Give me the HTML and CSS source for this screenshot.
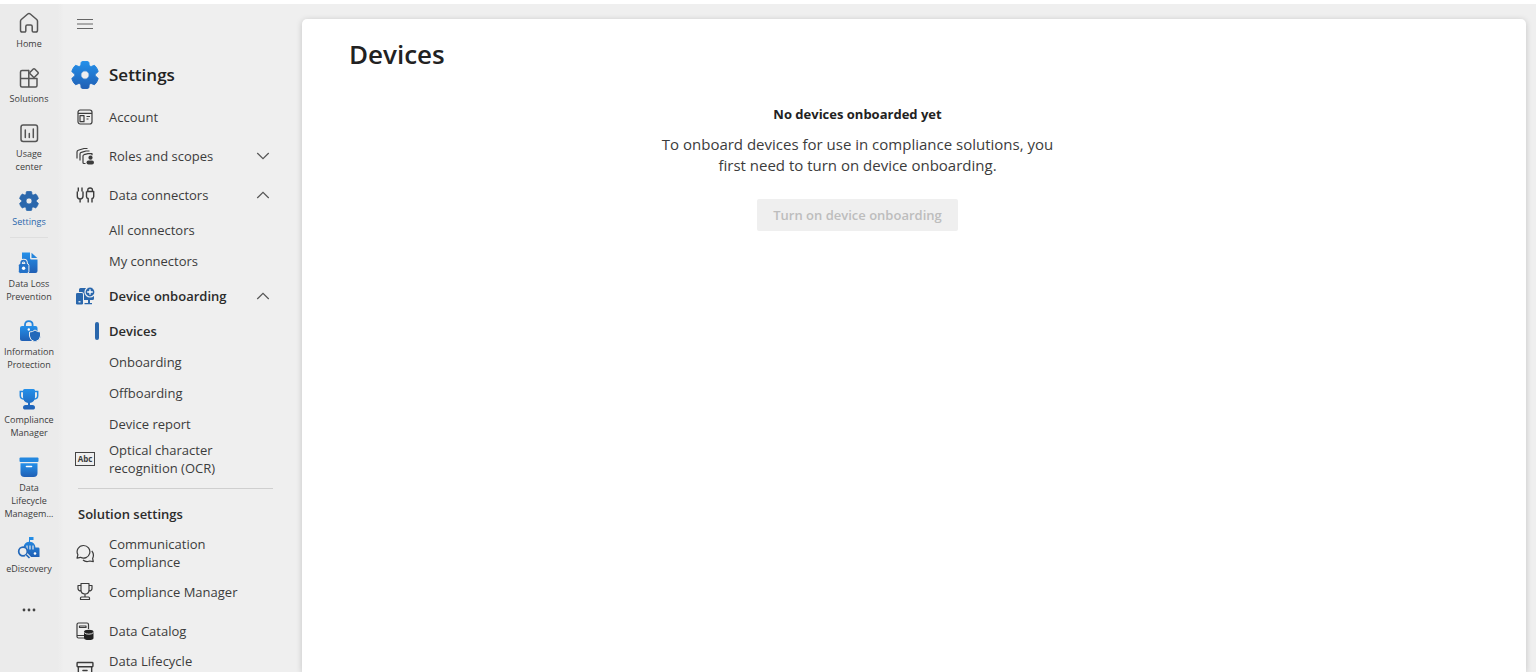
FILE: index.html
```html
<!DOCTYPE html>
<html lang="en">
<head>
<meta charset="utf-8">
<meta name="viewport" content="width=device-width, initial-scale=1">
<title>Devices - Settings</title>
<link rel="stylesheet" href="styles.css">
</head>
<body>
<svg class="defs" aria-hidden="true">
  <defs>
    <linearGradient id="blue" x1="0" y1="0" x2="0" y2="1"><stop offset="0" stop-color="#2490ea"/><stop offset="1" stop-color="#205fb4"/></linearGradient>
    <symbol id="gear" viewBox="2 2 20 20"><path fill-rule="evenodd" stroke-width=".7" stroke-linejoin="round" d="M12.01 2.25c.74 0 1.47.1 2.18.25.32.07.55.33.59.65l.17 1.53a1.38 1.38 0 0 0 1.92 1.11l1.4-.61c.3-.13.64-.06.85.17a9.8 9.8 0 0 1 2.2 3.8c.1.3 0 .63-.26.82l-1.24.92a1.38 1.38 0 0 0 0 2.22l1.24.92c.26.19.36.52.27.82a9.8 9.8 0 0 1-2.2 3.8.75.75 0 0 1-.85.17l-1.4-.62a1.38 1.38 0 0 0-1.93 1.12l-.17 1.52a.75.75 0 0 1-.58.65 9.52 9.52 0 0 1-4.4 0 .75.75 0 0 1-.57-.65l-.17-1.52a1.38 1.38 0 0 0-1.93-1.11l-1.4.62a.75.75 0 0 1-.85-.18 9.8 9.8 0 0 1-2.2-3.8c-.1-.3 0-.63.27-.82l1.24-.92a1.38 1.38 0 0 0 0-2.22l-1.24-.92a.75.75 0 0 1-.28-.82 9.8 9.8 0 0 1 2.2-3.8c.23-.23.57-.3.86-.17l1.4.62c.4.17.86.15 1.25-.08.38-.22.63-.6.68-1.04l.17-1.53a.75.75 0 0 1 .58-.65c.72-.16 1.45-.24 2.2-.25ZM12 9a3 3 0 1 0 0 6 3 3 0 0 0 0-6Z"/></symbol>
    <symbol id="chevron" viewBox="0 0 20 20"><path d="M4.500 7.300 10 12.700l5.500-5.400" fill="none" stroke="#555" stroke-width="1.200" stroke-linecap="round"/></symbol>
    <symbol id="archive" viewBox="0 0 24 24"><g fill="none" stroke="currentColor" stroke-width="1.700" stroke-linejoin="round"><rect x="2.500" y="3" width="19" height="5" rx=".8"/><path d="M4 8v11q0 2.500 2.500 2.500h11q2.500 0 2.500-2.500V8M9.500 12.500h5" stroke-linecap="round"/></g></symbol>
  </defs>
</svg>
<div class="app">
  <nav class="rail" aria-label="Main">
    <a class="rail-item" href="#"><svg class="rail-icon line" viewBox="0 0 24 24"><path d="M3.500 10.200q0-1 .8-1.700L10.700 3q1.300-1.100 2.600 0l6.400 5.500q.8.700.8 1.700v9q0 1.800-1.800 1.800h-2.200q-1.300 0-1.300-1.300v-4.200q0-1.500-1.500-1.500h-3.400q-1.500 0-1.500 1.500v4.200Q8.800 21 7.500 21H5.300q-1.800 0-1.800-1.800z"/></svg><span>Home</span></a>
    <a class="rail-item" href="#"><svg class="rail-icon line" viewBox="0 0 24 24"><path d="M11.500 4.500H5q-1.500 0-1.500 1.500v13.500Q3.500 21 5 21h13.500q1.500 0 1.500-1.500V12.500H3.500M11.800 4.500V21"/><rect x="13.700" y="3.700" width="6.600" height="6.600" rx="1" transform="rotate(45 17 7)"/></svg><span>Solutions</span></a>
    <a class="rail-item" href="#"><svg class="rail-icon line" viewBox="0 0 24 24"><rect x="4" y="4" width="16.500" height="16.500" rx="2.200"/><path d="M8.300 9v7.500M12.300 12.500v4M16.300 8v8.500"/></svg><span>Usage center</span></a>
    <a class="rail-item selected" href="#" aria-current="page"><svg class="rail-icon solid" viewBox="0 0 24 24"><use href="#gear" x="2" y="2" width="20" height="20"/></svg><span>Settings</span></a>
    <hr class="rail-rule">
    <a class="rail-item" href="#"><svg class="rail-icon" viewBox="0 0 24 24"><path fill="url(#blue)" d="M5 1.500h8V7q0 1.500 1.500 1.500h6V20q0 2-2 2H5z"/><path fill="#2585dc" d="m14.500 1.700 5.800 5.400h-5.800z"/><rect x="1.300" y="12.500" width="10.600" height="10" rx="2" fill="#2472c8" stroke="#ececec"/><path d="M4.100 13v-.8q0-2.600 2.500-2.600t2.500 2.600v.8" fill="none" stroke="#ececec" stroke-width="3.600"/><path d="M4.100 13.500v-1.300q0-2.600 2.500-2.600t2.500 2.600v1.300" fill="none" stroke="#2472c8" stroke-width="1.600"/><circle cx="6.600" cy="17.300" r="1.700" fill="#fff"/></svg><span>Data Loss Prevention</span></a>
    <a class="rail-item" href="#"><svg class="rail-icon" viewBox="0 0 24 24"><path d="M8 8V5.800q0-3.600 3.800-3.600t3.800 3.600V8" fill="none" stroke="#2585dc" stroke-width="1.800"/><path fill="url(#blue)" d="M5 7h13.500q2 0 2 2v11q0 2-2 2H5q-2 0-2-2V9q0-2 2-2z"/><path fill="#2469ba" stroke="#ececec" d="M12.500 13q3.300 0 5.500-2 2.300 2 5.500 2v4q0 4-5.500 6-5.500-2-5.500-6z"/><circle cx="11.800" cy="10.500" r="1.200" fill="#fff"/></svg><span>Information Protection</span></a>
    <a class="rail-item" href="#"><svg class="rail-icon" viewBox="0 0 24 24"><path d="M6.500 4.500H3.300v4.200q0 3.300 4 3.300M17.500 4.500h3.200v4.200q0 3.300-4 3.300" fill="none" stroke="#2387df" stroke-width="1.500"/><path fill="url(#blue)" d="M7.500 2h9q1.500 0 1.500 1.500V10q0 5-5 5.900V18h2.500q2.500 0 2.500 2.500 0 2-1.500 2h-9q-1.500 0-1.500-2Q6 18 8.500 18H11v-2.100Q6 15 6 10V3.500Q6 2 7.500 2z"/></svg><span>Compliance Manager</span></a>
    <a class="rail-item" href="#"><svg class="rail-icon" viewBox="0 0 24 24"><rect x="2.500" y="2.500" width="19" height="4.500" rx="1" fill="#2387df"/><path fill="url(#blue)" d="M3.500 8.300h17V18q0 4-4 4h-9q-4 0-4-4z"/><path d="M9.500 11.500h5" stroke="#fff" stroke-width="1.600" stroke-linecap="round"/></svg><span>Data Lifecycle Managem...</span></a>
    <a class="rail-item" href="#"><svg class="rail-icon" viewBox="0 0 24 24"><path fill="url(#blue)" d="M12 1h4.500v3H13v1.800q5 .7 5.500 5.700h2.700q1.300 0 1.300 1.300V21H9v-9.500H6.500q.5-5 5.500-5.700z"/><path d="M10 9.500v4M13 9.500v4M16 9.500v4" stroke="#ececec" stroke-width="1.200"/><circle cx="6" cy="15.500" r="4.300" fill="#ececec" stroke="#2469ba" stroke-width="1.700"/><path d="m9.300 18.500 3.400 3.400" stroke="#ececec" stroke-width="3.500"/><path d="m9 18.500 3.500 3.500" stroke="#2469ba" stroke-width="1.700"/><circle cx="18" cy="17.500" r="1.300" fill="#fff"/></svg><span>eDiscovery</span></a>
    <button class="rail-item more" type="button" aria-label="More"><svg class="rail-icon" viewBox="0 0 24 24" fill="#444"><circle cx="7" cy="12" r="1.400"/><circle cx="12" cy="12" r="1.400"/><circle cx="17" cy="12" r="1.400"/></svg></button>
  </nav>

  <nav class="side" aria-label="Settings">
    <button class="menu" type="button" aria-label="Collapse navigation"><svg viewBox="0 0 20 20"><path d="M2 5.500h16M2 10h16M2 14.500h16" stroke="#666" stroke-width="1.200"/></svg></button>
    <div class="side-head"><svg class="head-icon" viewBox="0 0 24 24"><use href="#gear" fill="url(#blue)" stroke="url(#blue)"/></svg><h2>Settings</h2></div>

    <a class="row" href="#"><svg class="icon" viewBox="0 0 20 20"><rect x="3" y="3" width="14" height="14" rx="2.200"/><path d="M3 6.300h14M11.500 9.500H15M11.500 12h2"/><rect x="5" y="8.700" width="4" height="6"/></svg><span>Account</span></a>
    <button class="row" type="button" aria-expanded="false"><svg class="icon" viewBox="0 0 20 20"><path d="M2 12.500V6q0-1.300 1.300-1.700L9 2.500h3.500M5 14.500V8q0-1.300 1.300-1.600L11 5h3.500M10.500 17.500H9q-1 0-1-1V10q0-1 1-1.300l4-1H17v1.500"/><circle cx="15.500" cy="11.700" r="2.100" fill="currentColor" stroke="none"/><rect x="11.500" y="14.500" width="7.500" height="4" rx="2" fill="currentColor" stroke="none"/></svg><span>Roles and scopes</span><svg class="chevron"><use href="#chevron"/></svg></button>
    <button class="row" type="button" aria-expanded="true"><svg class="icon" viewBox="0 0 20 20"><path stroke-width="1.400" d="M3.300 2.500v4M7 2.500v4M2.300 6.500v4.800q0 2.700 2.800 2.700T8 11.300V6.500M5.100 14v3.500M12.800 6.500V5q0-2 2.300-2t2.300 2v1.500M11.500 6.500h7.200v5q0 1.800-1.700 2v4M11.500 6.500v5q0 1.800 1.700 2v4"/></svg><span>Data connectors</span><svg class="chevron up"><use href="#chevron"/></svg></button>
    <a class="sub" href="#">All connectors</a>
    <a class="sub" href="#">My connectors</a>
    <button class="row strong" type="button" aria-expanded="true"><svg class="icon" viewBox="0 0 20 20"><path fill="#2a67ac" stroke="none" d="M5.500 2H12v12H9V8.500Q9 6 6.500 6H4V3.500Q4 2 5.500 2zM9 10h10v2.500q0 1.500-1.500 1.500H15v3h2v1.200H9.500V17H13v-3H9z"/><rect x="1" y="7" width="7" height="11.500" rx="1.300" fill="#2a67ac" stroke="none"/><circle cx="15" cy="6" r="5" fill="#2a67ac" stroke="#efefef"/><path d="M15 3.200v5.600M12.200 6h5.600" stroke="#fff" stroke-width="1.300"/><path d="M3.500 15.800h2" stroke="#fff"/></svg><span>Device onboarding</span><svg class="chevron up"><use href="#chevron"/></svg></button>
    <a class="sub current" href="#" aria-current="page">Devices</a>
    <a class="sub" href="#">Onboarding</a>
    <a class="sub" href="#">Offboarding</a>
    <a class="sub" href="#">Device report</a>
    <a class="row" href="#"><span class="icon-slot"><span class="abc" aria-hidden="true">Abc</span></span><span>Optical character recognition (OCR)</span></a>
    <hr class="rule">
    <h3>Solution settings</h3>
    <a class="row" href="#"><svg class="icon" viewBox="0 0 20 20"><path d="M8.500 2.500a6.300 6.300 0 1 1-3 11.800l-3.500.9.900-3.400A6.300 6.300 0 0 1 8.500 2.500zM8 17q2 1.800 4.800 1.500l2-.5 3.500.7-.7-3.300q2-4-.8-7.500"/></svg><span>Communication Compliance</span></a>
    <a class="row" href="#"><svg class="icon" viewBox="0 0 20 20"><path d="M6 1.500h8V8q0 4-4 4T6 8zM6 3.500H3v3q0 2.500 3.300 2.500M14 3.500h3v3q0 2.500-3.300 2.500M10 12v3M5.500 17.500V16q0-1 1-1h7q1 0 1 1v1.500z"/></svg><span>Compliance Manager</span></a>
    <a class="row" href="#"><svg class="icon" viewBox="0 0 20 20"><path d="M9 17H3.500Q2 17 2 15.500v-12Q2 2 3.500 2H12q1.500 0 1.500 1.500V8M2 14.500h7M4.500 5h6.500v1.500H4.500z"/><path fill="#222" stroke="none" d="M9 10.800q0-2 4.800-2t4.700 2V17q0 2-4.700 2T9 17z"/><path d="M9.300 11.700q1.500 1.500 4.500 1.500t4.500-1.500" stroke="#efefef" stroke-width=".9"/></svg><span>Data Catalog</span></a>
    <a class="row" href="#"><svg class="icon" viewBox="0 0 20 20"><use href="#archive"/></svg><span>Data Lifecycle Management</span></a>
  </nav>

  <main class="card">
    <h1>Devices</h1>
    <section class="empty">
      <h2>No devices onboarded yet</h2>
      <p>To onboard devices for use in compliance solutions, you first need to turn on device onboarding.</p>
      <button class="primary" type="button" disabled>Turn on device onboarding</button>
    </section>
  </main>
</div>
</body>
</html>
```
FILE: styles.css
```css
* { box-sizing: border-box; }
body {
  margin: 0;
  background: #efefef;
  color: #3c3c3c;
  font: 13px/18px "Open Sans", "Noto Sans", sans-serif;
}
h1, h2, h3, p { margin: 0; }
a { color: inherit; text-decoration: none; }
button { margin: 0; border: 0; background: none; color: inherit; font: inherit; }
.defs { position: absolute; width: 0; height: 0; }

.app {
  display: flex;
  height: 100vh;
  overflow: hidden;
  border-top: 4px solid #fff;
}

.rail {
  flex: none;
  width: 64px;
  padding-right: 6px;
  background: linear-gradient(90deg, #ebebeb 90%, #efefef);
}
.rail-item {
  display: flex;
  flex-direction: column;
  align-items: center;
  gap: 2px;
  width: 100%;
  padding: 7px 3px 9px;
  font-size: 9px;
  line-height: 13px;
  text-align: center;
}
.rail-icon { flex: none; width: 24px; height: 24px; }
.line { fill: none; stroke: #555; stroke-width: 1.5; stroke-linejoin: round; stroke-linecap: round; }
.solid { fill: #2a67ac; stroke: #2a67ac; }
.selected { color: #2a67ac; }
.rail-rule { margin: 0 10px 6px; border: 0; border-top: 1px solid #dedede; }
.more { padding-top: 14px; }

.side { flex: none; width: 238px; padding: 0 29px 0 7px; }
.menu { display: flex; align-items: center; justify-content: center; width: 28px; height: 40px; padding: 0; }
.menu svg { width: 20px; height: 20px; }
.side-head { display: flex; align-items: center; gap: 10px; height: 53px; padding-top: 9px; color: #222; }
.head-icon { width: 28px; height: 28px; }
.side-head h2 { font-size: 17px; line-height: 24px; font-weight: 600; }

.row {
  display: flex;
  align-items: center;
  gap: 10px;
  width: 100%;
  min-height: 39px;
  padding: 0;
  text-align: left;
}
.icon { flex: none; width: 20px; height: 20px; margin: 0 4px; fill: none; stroke: currentColor; stroke-width: 1.2; stroke-linejoin: round; }
.icon-slot { flex: none; display: flex; justify-content: center; width: 28px; }
.abc { border: 1px solid #444; padding: 0 2px; font-size: 8px; line-height: 12px; font-weight: 700; }
.chevron { width: 20px; height: 20px; margin-left: auto; }
.up { transform: rotate(180deg); }
.strong, .current { font-weight: 600; color: #2b2b2b; }
.sub { display: flex; align-items: center; height: 31px; padding-left: 38px; }
.current::before { content: ""; width: 4px; height: 18px; margin: 0 10px 0 -14px; border-radius: 2px; background: #2a67ac; }
.rule { margin: 10px 0 0 7px; border: 0; border-top: 1px solid #cfcfcf; }
.side h3 { padding: 16px 0 10px 7px; font-size: 13px; line-height: 18px; font-weight: 600; color: #2b2b2b; }

.card {
  flex: 1;
  min-width: 0;
  margin: 15px 10px 0 0;
  padding: 17px 47px;
  border-radius: 5px 5px 0 0;
  background: #fff;
  box-shadow: 0 1px 6px rgba(0, 0, 0, .18);
}
h1 { font-size: 26px; line-height: 36px; font-weight: 600; color: #222; }
.empty { display: flex; flex-direction: column; align-items: center; margin: 32px 113px 0 0; text-align: center; }
.empty h2 { font-size: 13px; line-height: 20px; font-weight: 700; color: #222; }
.empty p { max-width: 400px; margin: 10px 0 23px; font-size: 15px; line-height: 21px; }
.primary { height: 32px; padding: 0 16px; border-radius: 2px; background: #efefef; color: #bdbdbd; font-size: 13px; font-weight: 600; }
```
